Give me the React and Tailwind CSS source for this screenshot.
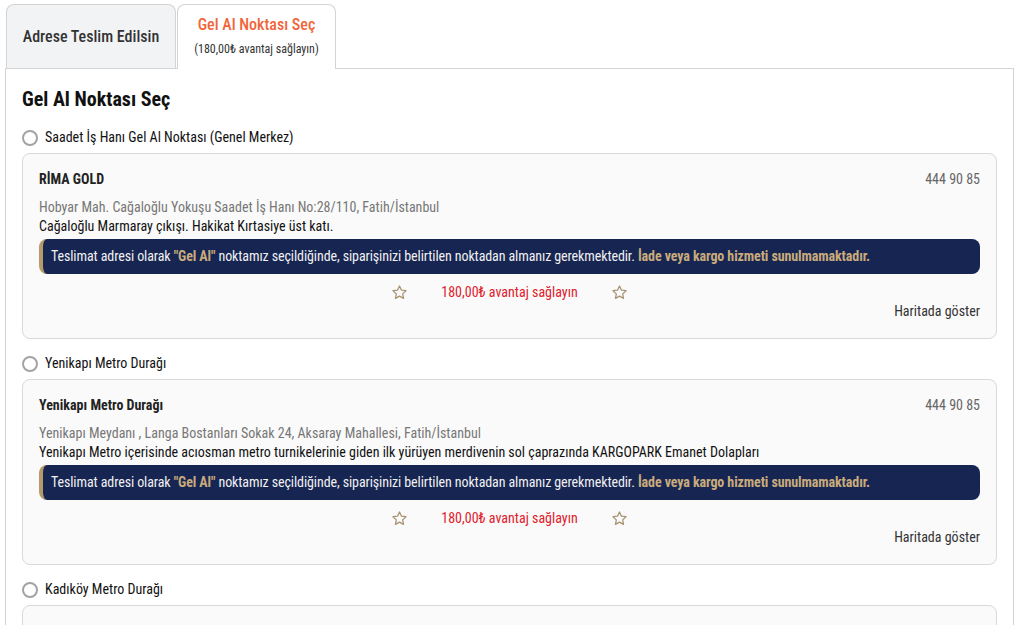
import { useState } from "react";

const font = {
  fontFamily:
    "'Roboto Condensed', 'Liberation Sans Narrow', 'DejaVu Sans Condensed', Roboto, sans-serif",
};

const points = [
  {
    id: 1,
    label: "Saadet İş Hanı Gel Al Noktası (Genel Merkez)",
    name: "RİMA GOLD",
    phone: "444 90 85",
    address: "Hobyar Mah. Cağaloğlu Yokuşu Saadet İş Hanı No:28/110, Fatih/İstanbul",
    note: "Cağaloğlu Marmaray çıkışı. Hakikat Kırtasiye üst katı.",
  },
  {
    id: 2,
    label: "Yenikapı Metro Durağı",
    name: "Yenikapı Metro Durağı",
    phone: "444 90 85",
    address: "Yenikapı Meydanı , Langa Bostanları Sokak 24, Aksaray Mahallesi, Fatih/İstanbul",
    note: "Yenikapı Metro içerisinde acıosman metro turnikelerinie giden ilk yürüyen merdivenin sol çaprazında KARGOPARK Emanet Dolapları",
  },
  {
    id: 3,
    label: "Kadıköy Metro Durağı",
    name: "Kadıköy Metro Durağı",
    phone: "444 90 85",
    address: "",
    note: "",
  },
];

const Star = () => (
  <svg
    width="17"
    height="17"
    viewBox="0 0 24 24"
    fill="none"
    stroke="#a89372"
    strokeWidth="1.8"
    strokeLinejoin="round"
  >
    <path d="M12 2.8l2.8 5.9 6.4.8-4.7 4.4 1.2 6.4L12 17.2l-5.7 3.1 1.2-6.4-4.7-4.4 6.4-.8z" />
  </svg>
);

const PointCard = ({ point }) => (
  <div className="rounded-lg border border-[#d9d9d9] bg-[#fafafa] px-4 pt-[15px] pb-[16px]">
    <div className="flex items-center justify-between">
      <span className="text-[14px] font-bold text-[#222]">{point.name}</span>
      <span className="text-[14px] text-[#666]">{point.phone}</span>
    </div>
    <div className="mt-[8px] text-[14px] leading-[19px] text-[#777]">{point.address}</div>
    <div className="text-[14px] leading-[19px] text-[#111]">{point.note}</div>
    <div className="mt-[3px] rounded-lg border-l-4 border-[#b59a6a] bg-[#172552] px-2 py-[8px] text-[14px] leading-[19px] tracking-[-0.1px] text-[#f1f1f1]">
      Teslimat adresi olarak{" "}
      <span className="font-bold text-[#c9ab7c]">"Gel Al"</span> noktamız
      seçildiğinde, siparişinizi belirtilen noktadan almanız gerekmektedir.{" "}
      <span className="font-bold text-[#c9ab7c]">
        İade veya kargo hizmeti sunulmamaktadır.
      </span>
    </div>
    <div className="mt-[8px] flex items-center justify-center gap-[33px]">
      <Star />
      <span className="text-[14px] text-[#e0202b]">180,00₺ avantaj sağlayın</span>
      <Star />
    </div>
    <div className="-mt-[2px] text-right text-[14px] text-[#333]">Haritada göster</div>
  </div>
);

export default function App() {
  const [tab, setTab] = useState(1);
  const [selected, setSelected] = useState(null);

  return (
    <div className="min-h-screen bg-white pl-[5px] pr-[6px] pt-1" style={font}>
      <div className="flex pl-px">
        <button
          onClick={() => setTab(0)}
          className="flex h-[64px] w-[170px] items-center justify-center rounded-t-lg border border-b-0 border-[#d4d4d4] bg-[#f2f3f5] text-[16px] font-medium text-[#333]"
        >
          Adrese Teslim Edilsin
        </button>
        <button
          onClick={() => setTab(1)}
          className="relative -mb-px ml-px flex h-[65px] w-[159px] flex-col items-center justify-center rounded-t-lg border border-b-0 border-[#d4d4d4] bg-white pb-[4px]"
        >
          <span className="text-[16px] font-medium text-[#f0653a]">Gel Al Noktası Seç</span>
          <span className="mt-[3px] text-[12px] text-[#333]">(180,00₺ avantaj sağlayın)</span>
        </button>
      </div>
      <div className="border border-[#d4d4d4] bg-white px-4 pt-[15px]">
        <h2 className="text-[20px] font-bold text-[#111]">Gel Al Noktası Seç</h2>
        <div className="mt-[13px] flex flex-col">
          {points.map((point) => (
            <div key={point.id} className="mb-[14px]">
              <label
                className="flex cursor-pointer items-center gap-[7px]"
                onClick={() => setSelected(point.id)}
              >
                <span className="flex h-4 w-4 items-center justify-center rounded-full border-2 border-[#a3a3a3] bg-white">
                  {selected === point.id && (
                    <span className="h-2 w-2 rounded-full bg-[#f0653a]" />
                  )}
                </span>
                <span className="text-[14px] text-[#111]">{point.label}</span>
              </label>
              <div className="mt-[5px]">
                <PointCard point={point} />
              </div>
            </div>
          ))}
        </div>
      </div>
    </div>
  );
}
